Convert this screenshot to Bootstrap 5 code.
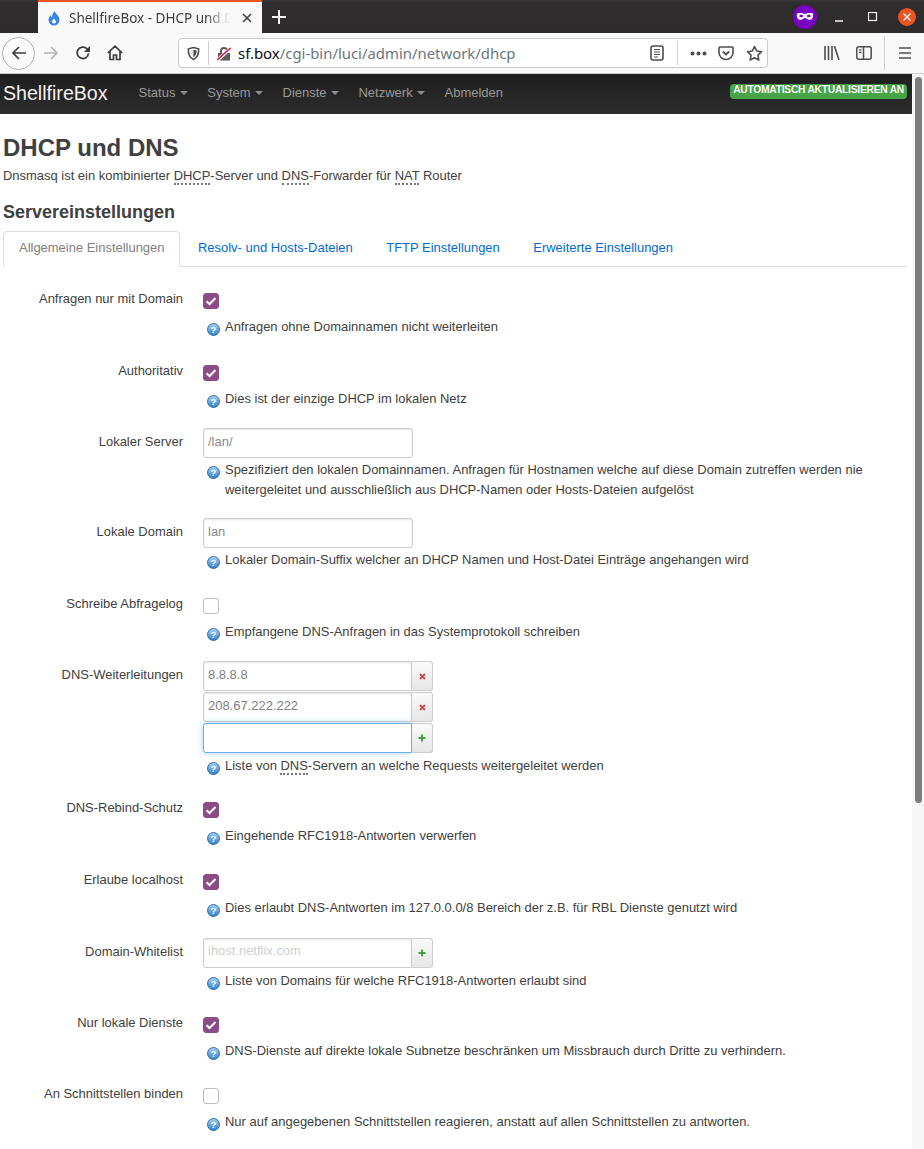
<!DOCTYPE html>
<html lang="de">
<head>
<meta charset="utf-8">
<title>ShellfireBox - DHCP und DNS</title>
<link rel="stylesheet" href="https://cdn.jsdelivr.net/npm/bootstrap@5.3.0/dist/css/bootstrap.min.css">
<style>
html,body{height:1149px;overflow:hidden;background:#fff}
body{font-family:"Liberation Sans",Arial,sans-serif;font-size:12.96px;line-height:20px;color:#404040}
.tabstrip{height:33px;background:linear-gradient(#3a3838 0,#2f2d2d 3px,#2d2b2b 100%);padding-left:38px}
.ftab{width:224px;height:33px;background:#f9f9f9;border-top:2px solid #e95420;font-family:"Noto Sans",sans-serif;font-size:13.5px;color:#3c3c3c;padding:0 9px;white-space:nowrap}
.ftab-title{width:161px;overflow:hidden;margin:0 8px;-webkit-mask-image:linear-gradient(90deg,#000 85%,transparent);mask-image:linear-gradient(90deg,#000 85%,transparent)}
.plus-wrap{width:34px;justify-content:center}
.wctl{width:34px;justify-content:center}
.mask-wrap{margin-right:5px}
.toolbar{height:41px;background:#f9f9f9;border-bottom:1px solid #ccc;padding:0 0 0 2px}
.backcircle{width:33px;height:33px;border:1px solid #b1b1b1;border-radius:50%;background:#fbfbfb;justify-content:center}
.tbtn{width:32px;justify-content:center;flex:none}
.urlbar{width:590px;height:30px;margin-left:47px;background:#fff;border:1px solid #c9c9c9;border-radius:4px;font-family:"Noto Sans",sans-serif;font-size:14.9px;color:#6b7680;white-space:nowrap;flex:none}
.urlbar b{font-weight:400;color:#0c0c0d}
.urltext{margin-left:7px}
.vsep{width:1px;height:24px;background:#cfcfcf;flex:none}
.pagewrap{height:1075px}
.pagemain{flex:1 1 auto;min-width:0}
.sbar{width:12px;flex:none;background:#f6f6f6;padding:3px 1px 0 3px}
.sthumb{height:726px;width:7px;border-radius:4px;background:#7d7d7d}
.topnav{height:40px;background:linear-gradient(#1e1e1e,#2d2d2d);padding:0 5px 0 3px}
.brandname{font-size:19.6px;color:#f2f2f2;line-height:32px;margin:0 31px 0 0;position:relative;top:-1px}
.topnav .nav-link{color:#999;font-size:13px;padding:0;margin-right:19.25px;line-height:20px;position:relative;top:-1px}
.caretx{display:inline-block;border-top:4px solid #8f8f8f;border-left:4px solid transparent;border-right:4px solid transparent;margin-left:1px;vertical-align:2px}
.autobadge{background:#46a546;color:#fff;font-size:10.2px;font-weight:700;line-height:12px;height:15px;padding:0 3px;border-radius:4px;text-transform:uppercase;margin-top:-5px;text-shadow:0 -1px 0 rgba(0,0,0,.25);letter-spacing:-.02em;white-space:nowrap}
.sheet{padding:0 5px 0 3px}
.ptitle{font-size:24px;font-weight:700;line-height:30px;margin:19px 0 0;color:#404040}
.pdesc{margin:3px 0 0;line-height:20px}
.stitle{font-size:18px;font-weight:700;line-height:24px;margin:14px 0 0;color:#404040}
abbr.term{text-decoration:none;border-bottom:2px dotted #777;cursor:help}
.tabline{margin-top:7px;border-bottom:1px solid #ddd;--bs-nav-tabs-border-color:#ddd}
.tabline .nav-link{font-size:12.96px;line-height:20px;padding:6px 15px 8px;margin-right:1.5px;color:#0069d6;border:1px solid transparent;border-radius:4px 4px 0 0;margin-bottom:-1px}
.tabline .nav-link.active{color:#808080;background:#fff;border-color:#ddd #ddd #fff}
.fieldlist{margin-top:18px}
.frow{display:flex;margin-bottom:19.5px}
.frow.tight{margin-bottom:18px}
.frow.late{margin-bottom:19.75px}
.frow-lab{width:180px;flex:none;text-align:right;line-height:20px;padding-top:4px}
.frow-body{margin-left:20px;flex:1 1 auto;min-width:0}
.ckline{height:30px;padding-top:8px}
.fakecheck{display:block;width:16px;height:16px;border-radius:3px;margin:0;border:1px solid #bdbdbd;background:#fff;appearance:none;-webkit-appearance:none}
.fakecheck:checked{background:#8a4d85 url("data:image/svg+xml,%3Csvg xmlns='http://www.w3.org/2000/svg' viewBox='0 0 16 16'%3E%3Cpath d='M3.500 8.200l3 2.800 6-6' fill='none' stroke='%23fff' stroke-width='2'/%3E%3C/svg%3E") center/16px no-repeat;border-color:#8a4d85}
.txtbox{width:210px;height:30px;font-size:12.96px;line-height:20px;color:#808080;padding:2px 4px 6px;border:1px solid #ccc;border-radius:3px;box-shadow:inset 0 1px 2px rgba(0,0,0,.1);font-family:inherit}
.txtbox::placeholder{color:#8a8a8a;opacity:1}
.txtbox.faint::placeholder{color:#cfcfcf}
.txtbox.lit{border-color:#68aef0;box-shadow:0 0 6px rgba(82,168,236,.5)}
.dyn{width:230px;height:30px;margin-bottom:1px;flex-wrap:nowrap}
.dyn .txtbox{width:209px;flex:none;border-radius:3px 0 0 3px}
.dyn .dyn-btn{width:21px;flex:none;padding:0;margin-left:0!important;border:1px solid #ccc;border-left:0;border-radius:0 3px 3px 0;background:linear-gradient(#fafafa,#e6e6e6);display:flex;align-items:center;justify-content:center}
.hint{display:flex;margin-top:2px;margin-left:4px;line-height:20px;max-width:680px}
.hint.after-dyn{margin-top:3px}
.hint svg{flex:none;margin:6px 5px 0 0}
</style>
</head>
<body>
<div class="tabstrip d-flex align-items-center">
  <div class="ftab d-flex align-items-center">
    <svg width="14" height="16" viewBox="0 0 14 16"><path d="M7.5 1c.6 2.600 5 4.400 5 9a5.500 5.500 0 0 1-11 0c0-2.300 1.200-3.800 2.300-4.800.1 1.100.5 1.900 1.200 2.300C5 5 6 2.700 7.500 1z" fill="#3d84e6"/><path d="M7 8.500c.5 1.100 2 1.600 2 3.100a2 2 0 0 1-4 0c0-1.300 1.500-1.800 2-3.100z" fill="#fff"/></svg>
    <span class="ftab-title">ShellfireBox - DHCP und DNS</span>
    <svg width="12" height="12" viewBox="0 0 12 12" class="ms-auto"><path d="M2 2l8 8M10 2l-8 8" stroke="#3c3c3c" stroke-width="1.500"/></svg>
  </div>
  <div class="plus-wrap d-flex"><svg width="14" height="14" viewBox="0 0 14 14"><path d="M7 0v14M0 7h14" stroke="#f2f2f2" stroke-width="2"/></svg></div>
  <div class="ms-auto d-flex align-items-center">
    <div class="mask-wrap d-flex"><svg width="24" height="24" viewBox="0 0 24 24"><circle cx="12" cy="12" r="12" fill="#7a00c4"/><path d="M4 8.500c2.500-.8 5.500-.6 8 .6 2.500-1.200 5.500-1.400 8-.6 .7 3.600-.8 6.500-3.600 6.500-2 0-3-1.900-4.400-1.900S9.600 15 7.600 15C4.800 15 3.300 12.100 4 8.500z" fill="#fff"/><ellipse cx="8.200" cy="11" rx="1.900" ry="1.300" fill="#7a00c4"/><ellipse cx="15.800" cy="11" rx="1.900" ry="1.300" fill="#7a00c4"/></svg></div>
    <div class="wctl d-flex"><svg width="10" height="10" viewBox="0 0 10 10"><path d="M1 9h8" stroke="#f2f2f2" stroke-width="1.500"/></svg></div>
    <div class="wctl d-flex"><svg width="10" height="10" viewBox="0 0 10 10"><rect x=".5" y=".5" width="8" height="8" fill="none" stroke="#f2f2f2" stroke-width="1.200"/></svg></div>
    <div class="wctl d-flex"><svg width="18" height="18" viewBox="0 0 18 18"><circle cx="9" cy="9" r="9" fill="#e95420"/><path d="M5.500 5.500l7 7M12.500 5.500l-7 7" stroke="#fff" stroke-width="1.300"/></svg></div>
  </div>
</div>
<div class="toolbar d-flex align-items-center">
  <div class="backcircle d-flex align-items-center"><svg width="16" height="16" viewBox="0 0 16 16"><path d="M15 8H2M8 2L2 8l6 6" fill="none" stroke="#3d3d3d" stroke-width="1.700"/></svg></div>
  <div class="tbtn d-flex"><svg width="16" height="16" viewBox="0 0 16 16"><path d="M1 8h13M8 2l6 6-6 6" fill="none" stroke="#b5b5b5" stroke-width="1.700"/></svg></div>
  <div class="tbtn d-flex"><svg width="16" height="16" viewBox="0 0 16 16"><path d="M13.500 8.500A5.700 5.700 0 1 1 11.800 3.700L14 6" fill="none" stroke="#3d3d3d" stroke-width="1.800"/><path d="M15 1v6H9z" fill="#3d3d3d"/></svg></div>
  <div class="tbtn d-flex"><svg width="16" height="16" viewBox="0 0 16 16"><path d="M.8 8L8 1.200 15.200 8M3 6.500V14.500h3.500V10h3v4.500H13V6.500" fill="none" stroke="#3d3d3d" stroke-width="1.700"/></svg></div>
  <div class="urlbar d-flex align-items-center">
    <svg class="ms-2" width="13" height="15" viewBox="0 0 14 15"><path d="M7 1l5.500 1.500c.3 5-1.500 9.500-5.500 11.500C3 12 1.200 7.500 1.500 2.500z" fill="none" stroke="#4d4d4d" stroke-width="1.700"/><path d="M7 3.500l3.300.9C10.400 7.500 9.300 10 7 11.500 4.700 10 3.600 7.500 3.700 4.400z" fill="#e4e4e4"/><path d="M7 3.500l3.300.9C10.400 7.500 9.300 10 7 11.500z" fill="#4d4d4d"/></svg>
    <span class="vsep ms-2"></span>
    <svg class="ms-2" width="14" height="15" viewBox="0 0 14 15"><path d="M3 7V5a4 4 0 0 1 8 0v2h2v7.500H1V7z" fill="#5b5b5b"/><path d="M5 7V5a2 2 0 0 1 4 0v2z" fill="#f9f9f9"/><path d="M0 14.500L14 2" stroke="#fff" stroke-width="3.500"/><path d="M.3 13.800L13.700 1.800" stroke="#e22850" stroke-width="1.700"/></svg>
    <span class="urltext"><b>sf.box</b>/cgi-bin/luci/admin/network/dhcp</span>
    <div class="ms-auto d-flex align-items-center">
      <svg width="14" height="16" viewBox="0 0 14 16"><rect x="1" y="1" width="12" height="14" rx="2" fill="none" stroke="#4d4d4d" stroke-width="1.600"/><path d="M4 4.500h6M4 7h6M4 9.500h6M4 12h4" stroke="#4d4d4d" stroke-width="1.200"/></svg>
      <span class="vsep" style="margin-left:13px"></span>
      <svg style="margin-left:12px" width="17" height="5" viewBox="0 0 17 5"><circle cx="2.500" cy="2.500" r="2" fill="#4d4d4d"/><circle cx="8.500" cy="2.500" r="2" fill="#4d4d4d"/><circle cx="14.500" cy="2.500" r="2" fill="#4d4d4d"/></svg>
      <svg style="margin-left:11px" width="16" height="15" viewBox="0 0 16 15"><path d="M2 1h12a1 1 0 0 1 1 1v4.500a7 7 0 0 1-14 0V2a1 1 0 0 1 1-1z" fill="none" stroke="#4d4d4d" stroke-width="1.600"/><path d="M4.800 5.500L8 8.500l3.200-3" fill="none" stroke="#4d4d4d" stroke-width="1.800"/></svg>
      <svg style="margin:0 4px 0 12px" width="17" height="16" viewBox="0 0 17 16"><path d="M8.500 1.500l2.200 4.500 4.800.7-3.500 3.400.8 4.900-4.300-2.300-4.300 2.300.8-4.900L1.500 6.700l4.800-.7z" fill="none" stroke="#4d4d4d" stroke-width="1.600" stroke-linejoin="round"/></svg>
    </div>
  </div>
  <div class="ms-auto d-flex align-items-center">
    <svg width="16" height="14" viewBox="0 0 16 14"><path d="M1 0v14M4.500 0v14M8 0v14M10.500 0l4.500 14" stroke="#4d4d4d" stroke-width="1.600" fill="none"/></svg>
    <svg style="margin-left:16px" width="16" height="14" viewBox="0 0 16 14"><rect x=".8" y=".8" width="14.400" height="12.400" rx="2" fill="none" stroke="#4d4d4d" stroke-width="1.500"/><path d="M7.500 1v12" stroke="#4d4d4d" stroke-width="1.500"/><path d="M3 3.800h2.500M3 6.300h2.500" stroke="#4d4d4d" stroke-width="1.200"/></svg>
    <span class="vsep" style="margin-left:12px;height:34px"></span>
    <svg style="margin:0 12px 0 13px" width="14" height="12" viewBox="0 0 14 12"><path d="M1 1h12M1 6h12M1 11h12" stroke="#4d4d4d" stroke-width="1.600"/></svg>
  </div>
</div>
<div class="pagewrap d-flex">
  <div class="pagemain">
    <nav class="topnav d-flex align-items-center">
      <a class="brandname text-decoration-none" href="#">ShellfireBox</a>
      <ul class="nav">
        <li class="nav-item"><a class="nav-link" href="#">Status <span class="caretx"></span></a></li>
        <li class="nav-item"><a class="nav-link" href="#">System <span class="caretx"></span></a></li>
        <li class="nav-item"><a class="nav-link" href="#">Dienste <span class="caretx"></span></a></li>
        <li class="nav-item"><a class="nav-link" href="#">Netzwerk <span class="caretx"></span></a></li>
        <li class="nav-item"><a class="nav-link" href="#">Abmelden</a></li>
      </ul>
      <span class="autobadge ms-auto">Automatisch aktualisieren an</span>
    </nav>
    <div class="sheet">
      <h2 class="ptitle">DHCP und DNS</h2>
      <p class="pdesc">Dnsmasq ist ein kombinierter <abbr class="term" title="Dynamic Host Configuration Protocol">DHCP</abbr>-Server und <abbr class="term" title="Domain Name System">DNS</abbr>-Forwarder für <abbr class="term" title="Network Address Translation">NAT</abbr> Router</p>
      <h3 class="stitle">Servereinstellungen</h3>
      <ul class="nav nav-tabs tabline">
        <li class="nav-item"><a class="nav-link active" href="#">Allgemeine Einstellungen</a></li>
        <li class="nav-item"><a class="nav-link" href="#">Resolv- und Hosts-Dateien</a></li>
        <li class="nav-item"><a class="nav-link" href="#">TFTP Einstellungen</a></li>
        <li class="nav-item"><a class="nav-link" href="#">Erweiterte Einstellungen</a></li>
      </ul>
      <svg width="0" height="0" class="d-block"><defs><linearGradient id="hg" x1="0" y1="0" x2="0" y2="1"><stop offset="0" stop-color="#a9d3f5"/><stop offset="1" stop-color="#2f7fc9"/></linearGradient><symbol id="helpi" viewBox="0 0 13 13"><circle cx="6.500" cy="6.500" r="6" fill="url(#hg)" stroke="#2f6ea8"/><text x="6.500" y="10" font-size="9.500" font-weight="700" text-anchor="middle" fill="#fff" font-family="Liberation Sans">?</text></symbol></defs></svg>
      <div class="fieldlist">
        <div class="frow"><div class="frow-lab">Anfragen nur mit Domain</div><div class="frow-body"><div class="ckline"><input class="fakecheck" type="checkbox" checked></div><div class="hint"><svg width="13" height="13"><use href="#helpi"/></svg><span>Anfragen ohne Domainnamen nicht weiterleiten</span></div></div></div>
        <div class="frow"><div class="frow-lab">Authoritativ</div><div class="frow-body"><div class="ckline"><input class="fakecheck" type="checkbox" checked></div><div class="hint"><svg width="13" height="13"><use href="#helpi"/></svg><span>Dies ist der einzige DHCP im lokalen Netz</span></div></div></div>
        <div class="frow tight"><div class="frow-lab">Lokaler Server</div><div class="frow-body"><input class="form-control txtbox" type="text" placeholder="/lan/"><div class="hint"><svg width="13" height="13"><use href="#helpi"/></svg><span>Spezifiziert den lokalen Domainnamen. Anfragen für Hostnamen welche auf diese Domain zutreffen werden nie weitergeleitet und ausschließlich aus DHCP-Namen oder Hosts-Dateien aufgelöst</span></div></div></div>
        <div class="frow"><div class="frow-lab">Lokale Domain</div><div class="frow-body"><input class="form-control txtbox" type="text" placeholder="lan"><div class="hint"><svg width="13" height="13"><use href="#helpi"/></svg><span>Lokaler Domain-Suffix welcher an DHCP Namen und Host-Datei Einträge angehangen wird</span></div></div></div>
        <div class="frow"><div class="frow-lab">Schreibe Abfragelog</div><div class="frow-body"><div class="ckline"><input class="fakecheck" type="checkbox"></div><div class="hint"><svg width="13" height="13"><use href="#helpi"/></svg><span>Empfangene DNS-Anfragen in das Systemprotokoll schreiben</span></div></div></div>
        <div class="frow tight"><div class="frow-lab">DNS-Weiterleitungen</div><div class="frow-body">
          <div class="input-group dyn"><input class="form-control txtbox" type="text" value="8.8.8.8"><button class="btn dyn-btn" type="button"><svg width="7" height="7" viewBox="0 0 7 7"><path d="M1 1l5 5M6 1L1 6" stroke="#d14a4a" stroke-width="1.800"/></svg></button></div>
          <div class="input-group dyn"><input class="form-control txtbox" type="text" value="208.67.222.222"><button class="btn dyn-btn" type="button"><svg width="7" height="7" viewBox="0 0 7 7"><path d="M1 1l5 5M6 1L1 6" stroke="#d14a4a" stroke-width="1.800"/></svg></button></div>
          <div class="input-group dyn"><input class="form-control txtbox lit" type="text"><button class="btn dyn-btn" type="button"><svg width="8" height="8" viewBox="0 0 8 8"><path d="M4 .5v7M.5 4h7" stroke="#3f9f45" stroke-width="1.900"/></svg></button></div>
          <div class="hint after-dyn"><svg width="13" height="13"><use href="#helpi"/></svg><span>Liste von <abbr class="term" title="Domain Name System">DNS</abbr>-Servern an welche Requests weitergeleitet werden</span></div></div></div>
        <div class="frow late"><div class="frow-lab">DNS-Rebind-Schutz</div><div class="frow-body"><div class="ckline"><input class="fakecheck" type="checkbox" checked></div><div class="hint"><svg width="13" height="13"><use href="#helpi"/></svg><span>Eingehende RFC1918-Antworten verwerfen</span></div></div></div>
        <div class="frow late"><div class="frow-lab">Erlaube localhost</div><div class="frow-body"><div class="ckline"><input class="fakecheck" type="checkbox" checked></div><div class="hint"><svg width="13" height="13"><use href="#helpi"/></svg><span>Dies erlaubt DNS-Antworten im 127.0.0.0/8 Bereich der z.B. für RBL Dienste genutzt wird</span></div></div></div>
        <div class="frow tight"><div class="frow-lab">Domain-Whitelist</div><div class="frow-body"><div class="input-group dyn"><input class="form-control txtbox faint" type="text" placeholder="ihost.netflix.com"><button class="btn dyn-btn" type="button"><svg width="8" height="8" viewBox="0 0 8 8"><path d="M4 .5v7M.5 4h7" stroke="#3f9f45" stroke-width="1.900"/></svg></button></div><div class="hint after-dyn"><svg width="13" height="13"><use href="#helpi"/></svg><span>Liste von Domains für welche RFC1918-Antworten erlaubt sind</span></div></div></div>
        <div class="frow late"><div class="frow-lab">Nur lokale Dienste</div><div class="frow-body"><div class="ckline"><input class="fakecheck" type="checkbox" checked></div><div class="hint"><svg width="13" height="13"><use href="#helpi"/></svg><span>DNS-Dienste auf direkte lokale Subnetze beschränken um Missbrauch durch Dritte zu verhindern.</span></div></div></div>
        <div class="frow"><div class="frow-lab">An Schnittstellen binden</div><div class="frow-body"><div class="ckline"><input class="fakecheck" type="checkbox"></div><div class="hint"><svg width="13" height="13"><use href="#helpi"/></svg><span>Nur auf angegebenen Schnittstellen reagieren, anstatt auf allen Schnittstellen zu antworten.</span></div></div></div>
      </div>
    </div>
  </div>
  <div class="sbar"><div class="sthumb"></div></div>
</div>
<script src="https://cdn.jsdelivr.net/npm/bootstrap@5.3.0/dist/js/bootstrap.bundle.min.js"></script>
</body>
</html>
